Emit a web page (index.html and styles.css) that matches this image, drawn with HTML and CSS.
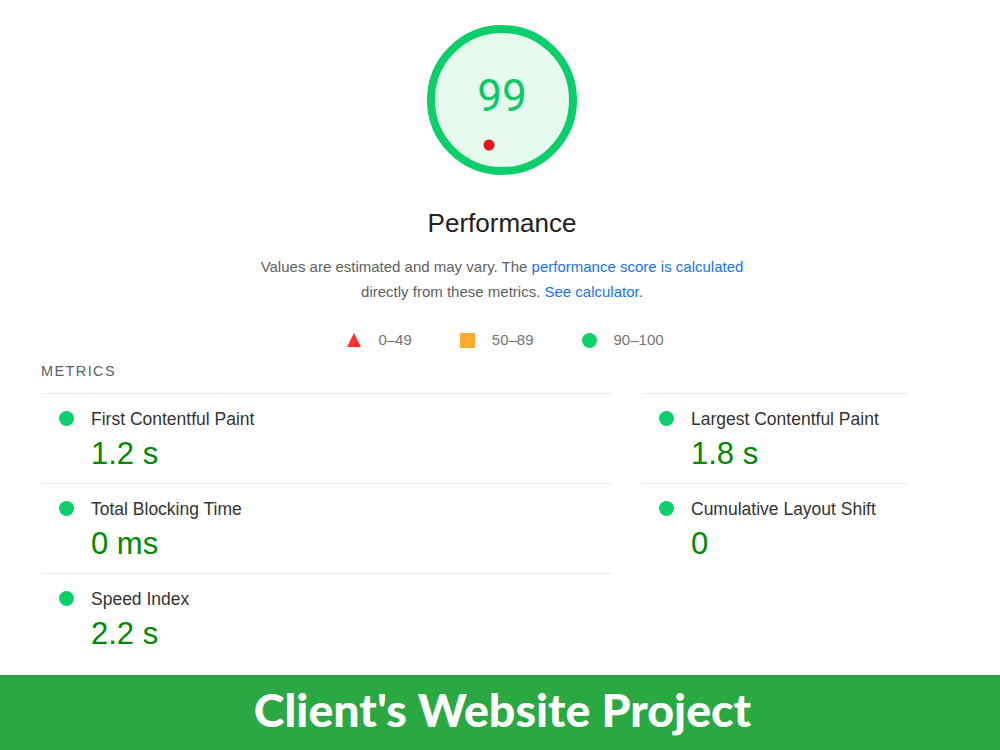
FILE: index.html
```html
<!DOCTYPE html>
<html lang="en">
<head>
  <meta charset="UTF-8" />
  <meta name="viewport" content="width=device-width, initial-scale=1.0"/>
  <title>Performance Report</title>
  <link rel="stylesheet" href="styles.css">
</head>
<body>
  <div class="report">
    <div class="summary">
      <svg class="gauge" width="160" height="160" viewBox="0 0 160 160">
        <circle cx="80" cy="80" r="71" fill="#e6f9ef" stroke="#0cce6b" stroke-width="8"/>
        <text x="80" y="91" text-anchor="middle" class="gauge-score">99</text>
        <circle cx="67" cy="125" r="5.5" fill="#e5121b"/>
      </svg>
      <h2 class="title">Performance</h2>
      <p class="desc">
        Values are estimated and may vary. The <a href="#">performance score is calculated</a><br>
        directly from these metrics. <a href="#">See calculator.</a>
      </p>

      <div class="legend">
        <span class="legend-item"><span class="icon triangle"></span>0–49</span>
        <span class="legend-item"><span class="icon square"></span>50–89</span>
        <span class="legend-item"><span class="icon circle"></span>90–100</span>
      </div>
    </div>

    <div class="metrics">
      <div class="metrics-title">METRICS</div>
      <div class="metrics-grid">
        <div class="metric">
          <span class="dot"></span>
          <div>
            <div class="metric-label">First Contentful Paint</div>
            <div class="metric-value">1.2 s</div>
          </div>
        </div>
        <div class="metric">
          <span class="dot"></span>
          <div>
            <div class="metric-label">Largest Contentful Paint</div>
            <div class="metric-value">1.8 s</div>
          </div>
        </div>
        <div class="metric">
          <span class="dot"></span>
          <div>
            <div class="metric-label">Total Blocking Time</div>
            <div class="metric-value">0 ms</div>
          </div>
        </div>
        <div class="metric">
          <span class="dot"></span>
          <div>
            <div class="metric-label">Cumulative Layout Shift</div>
            <div class="metric-value">0</div>
          </div>
        </div>
        <div class="metric">
          <span class="dot"></span>
          <div>
            <div class="metric-label">Speed Index</div>
            <div class="metric-value">2.2 s</div>
          </div>
        </div>
      </div>
    </div>
  </div>

  <div class="banner">Client's Website Project</div>
</body>
</html>
```

FILE: styles.css
```css
body {
  margin: 0;
  padding: 0;
  font-family: 'Liberation Sans', Arial, sans-serif;
  background: #fff;
  color: #212121;
}

.report {
  height: 675px;
  overflow: hidden;
}

.summary {
  display: flex;
  flex-direction: column;
  align-items: center;
  padding-left: 4px;
}

.gauge {
  display: block;
  margin-top: 20px;
}

.gauge-score {
  font-family: 'Roboto', sans-serif;
  font-size: 44px;
  fill: #0cc866;
}

.title {
  margin: 28px 0 0;
  font-size: 26px;
  font-weight: normal;
  line-height: 30px;
  color: #212121;
}

.desc {
  margin: 16px 0 0;
  font-size: 15px;
  line-height: 25px;
  color: #616161;
  text-align: center;
}

.desc a {
  color: #1a73e8;
  text-decoration: none;
}

.legend {
  display: flex;
  gap: 48px;
  margin: 26px 0 0 7px;
  font-size: 15px;
  line-height: 20px;
  color: #757575;
}

.legend-item {
  display: flex;
  align-items: center;
  gap: 17px;
}

.icon {
  display: inline-block;
  width: 15px;
  height: 15px;
}

.triangle {
  width: 0;
  height: 0;
  border-left: 7.5px solid transparent;
  border-right: 7.5px solid transparent;
  border-bottom: 14px solid #ff3333;
}

.square {
  width: 15px;
  height: 15px;
  background: #ffaa33;
}

.circle {
  border-radius: 50%;
  background: #0cce6b;
}

.metrics {
  padding-left: 41px;
}

.metrics-title {
  margin-top: 11px;
  font-size: 14.5px;
  line-height: 20px;
  letter-spacing: 1.4px;
  color: #616161;
}

.metrics-grid {
  display: grid;
  grid-template-columns: 570px 265px;
  column-gap: 31px;
  margin-top: 12px;
}

.metric {
  display: flex;
  align-items: flex-start;
  gap: 17px;
  border-top: 1px solid #ebebeb;
  padding: 15px 0 11px 18px;
}

.dot {
  flex: none;
  width: 15px;
  height: 15px;
  margin-top: 2px;
  border-radius: 50%;
  background: #0cce6b;
}

.metric:nth-child(even) {
  padding-left: 17px;
}

.metric-label {
  font-size: 17.5px;
  line-height: 20px;
  color: #333;
}

.metric-value {
  margin-top: 7px;
  font-size: 31px;
  line-height: 36px;
  color: #008800;
}

.banner {
  height: 75px;
  padding-left: 5px;
  background: #2aa842;
  color: #fff;
  font-family: 'Lato', sans-serif;
  font-weight: 900;
  font-size: 46.5px;
  line-height: 69px;
  text-align: center;
}
```
